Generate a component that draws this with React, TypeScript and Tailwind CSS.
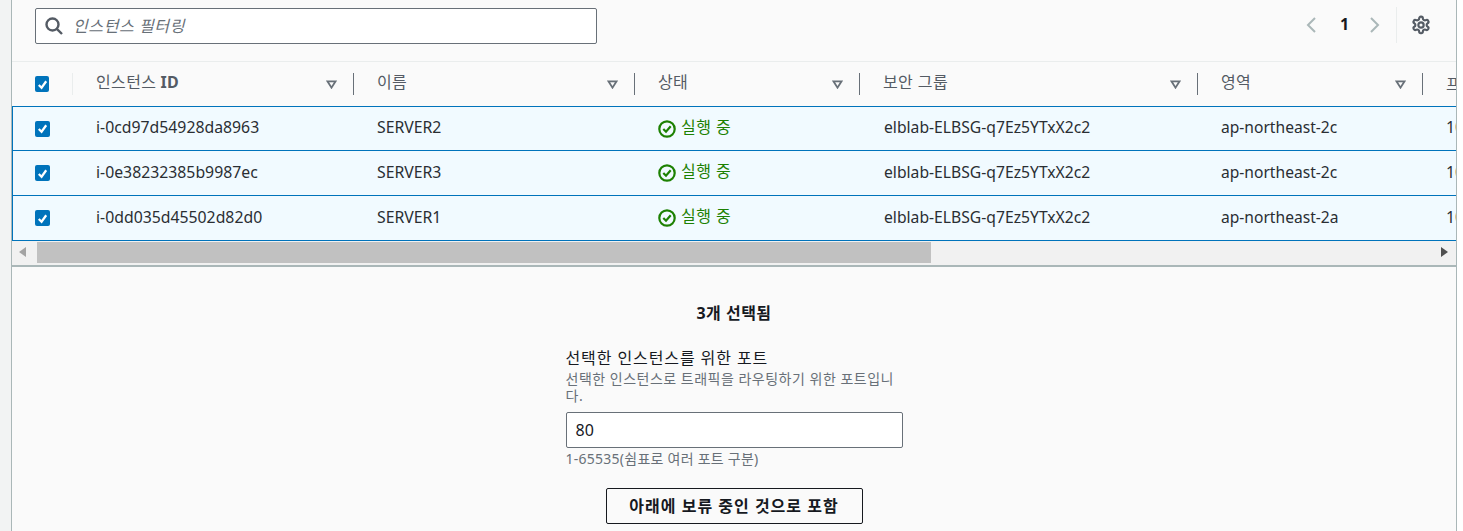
const font = "font-['Noto_Sans','Noto_Sans_CJK_KR',sans-serif]";

const columns = [
  { label: '인스턴스', suffix: 'ID', width: 'w-[281px]' },
  { label: '이름', width: 'w-[281px]' },
  { label: '상태', width: 'w-[225px]' },
  { label: '보안 그룹', width: 'w-[338px]' },
  { label: '영역', width: 'w-[225px]' },
];

const rows = [
  { id: 'i-0cd97d54928da8963', name: 'SERVER2', zone: 'ap-northeast-2c' },
  { id: 'i-0e38232385b9987ec', name: 'SERVER3', zone: 'ap-northeast-2c' },
  { id: 'i-0dd035d45502d82d0', name: 'SERVER1', zone: 'ap-northeast-2a' },
];

function Check() {
  return (
    <span className="flex h-[16px] w-[15px] items-center justify-center rounded-[2px] bg-[#0073bb]">
      <svg viewBox="0 0 14 14" className="h-[13px] w-[13px]" fill="none" stroke="white" strokeWidth="2.4">
        <path d="M3 7.5 6 10.5 11 3.5" />
      </svg>
    </span>
  );
}

function SortArrow() {
  return (
    <svg viewBox="0 0 12 10" className="h-[9px] w-[11px]" fill="none" stroke="#687078" strokeWidth="2">
      <path d="M1.5 1.5h9L6 8.5z" />
    </svg>
  );
}

function RunningIcon() {
  return (
    <svg viewBox="0 0 18 18" className="h-[18px] w-[18px] shrink-0" fill="none" stroke="#1d8102" strokeWidth="2.2">
      <circle cx="9" cy="9" r="7.7" />
      <path d="M5.3 9 8 11.7 12.7 6.3" />
    </svg>
  );
}

function SearchIcon() {
  return (
    <svg viewBox="0 0 18 18" className="h-[18px] w-[18px]" fill="none" stroke="#545b64" strokeWidth="2.4">
      <circle cx="7.5" cy="7.5" r="6" />
      <path d="M11.8 11.8 17 17" />
    </svg>
  );
}

function PageChevron({ d }: { d: string }) {
  return (
    <svg viewBox="0 0 12 18" className="h-[18px] w-[12px]" fill="none" stroke="#aab7b8" strokeWidth="2">
      <path d={d} />
    </svg>
  );
}

function GearIcon() {
  return (
    <svg viewBox="0 0 24 24" className="h-[20px] w-[20px]" fill="none" stroke="#545b64" strokeWidth="2.6" strokeLinejoin="round">
      <path d="M12.2 2h-.4a2 2 0 0 0-2 2v.2a2 2 0 0 1-1 1.7l-.4.3a2 2 0 0 1-2 0l-.2-.1a2 2 0 0 0-2.7.7l-.2.4a2 2 0 0 0 .7 2.7l.2.1a2 2 0 0 1 1 1.7v.5a2 2 0 0 1-1 1.7l-.2.1a2 2 0 0 0-.7 2.7l.2.4a2 2 0 0 0 2.7.7l.2-.1a2 2 0 0 1 2 0l.4.3a2 2 0 0 1 1 1.7v.2a2 2 0 0 0 2 2h.4a2 2 0 0 0 2-2v-.2a2 2 0 0 1 1-1.7l.4-.3a2 2 0 0 1 2 0l.2.1a2 2 0 0 0 2.7-.7l.2-.4a2 2 0 0 0-.7-2.7l-.2-.1a2 2 0 0 1-1-1.7v-.5a2 2 0 0 1 1-1.7l.2-.1a2 2 0 0 0 .7-2.7l-.2-.4a2 2 0 0 0-2.7-.7l-.2.1a2 2 0 0 1-2 0l-.4-.3a2 2 0 0 1-1-1.7V4a2 2 0 0 0-2-2z" />
      <circle cx="12" cy="12" r="3.2" />
    </svg>
  );
}

export default function App() {
  return (
    <div className={`${font} h-[531px] w-[1463px] overflow-hidden bg-white text-[15.8px] text-[#2a2e33]`}>
      <div className="flex h-full">
        <div className="w-[12px] shrink-0 border-r border-[#aab7b8] bg-[#f2f3f3]" />
        <div className="flex w-[1445px] shrink-0 flex-col border-r border-[#aab7b8] bg-[#fafafa]">
          <div className="flex h-[62px] shrink-0 items-start border-b border-[#eaeded] pl-[23px]">
            <div className="mt-2 flex h-[36px] w-[562px] items-center rounded-[2px] border border-[#687078] bg-white pl-[9px]">
              <SearchIcon />
              <span className="ml-[10px] text-[16px] tracking-[0.6px] italic text-[#687078]">인스턴스 필터링</span>
            </div>
            <div className="ml-[708px] mt-[7px] flex h-[36px] items-center">
              <PageChevron d="M10 2 3 9l7 7" />
              <span className="ml-[23px] -translate-y-[1px] text-[16px] font-bold text-[#16191f]">1</span>
              <span className="ml-[20px]">
                <PageChevron d="M2 2l7 7-7 7" />
              </span>
              <span className="ml-[15px] h-[36px] border-l border-[#eaeded]" />
              <span className="ml-[14px]">
                <GearIcon />
              </span>
            </div>
          </div>

          <div className="flex h-[44px] shrink-0 items-center">
            <div className="flex w-[61px] shrink-0 items-center pl-[23px]">
              <Check />
              <span className="ml-[23px] h-[22px] border-l border-[#eaeded]" />
            </div>
            {columns.map((col) => (
              <div key={col.label} className={`${col.width} flex shrink-0 items-center pl-[23px]`}>
                <span className="flex-1 -translate-y-[2px] text-[16px] tracking-[0.4px] text-[#545b64]">
                  {col.label}
                  {col.suffix && <b className="ml-[4px]">{col.suffix}</b>}
                </span>
                <SortArrow />
                <span className="ml-[16px] h-[22px] border-l border-[#687078]" />
              </div>
            ))}
            <span className="overflow-hidden whitespace-nowrap pl-[23px] text-[16px] text-[#545b64]">프라이빗</span>
          </div>

          <div className="shrink-0 border-b border-l border-[#0073bb] bg-[#f1faff]">
            {rows.map((row, i) => {
              const lift = i === 0 ? '-translate-y-[1px]' : 'translate-y-0';
              return (
                <div
                  key={row.id}
                  className={`flex items-center overflow-hidden border-t border-[#0073bb] ${i === 0 ? 'h-[44px]' : 'h-[45px]'}`}
                >
                  <div className="w-[60px] shrink-0 pl-[22px]">
                    <Check />
                  </div>
                  <div className={`w-[281px] shrink-0 pl-[23px] ${lift}`}>{row.id}</div>
                  <div className={`w-[281px] shrink-0 pl-[23px] ${lift}`}>{row.name}</div>
                  <div className="flex w-[225px] shrink-0 items-center gap-[5px] pl-[23px] text-[#1d8102]">
                    <RunningIcon />
                    <span className="-translate-y-[2px] text-[16px] tracking-[0.5px]">실행 중</span>
                  </div>
                  <div className={`w-[338px] shrink-0 pl-[24px] text-[15.7px] ${lift}`}>elblab-ELBSG-q7Ez5YTxX2c2</div>
                  <div className={`w-[225px] shrink-0 pl-[23px] text-[15.6px] ${lift}`}>{row.zone}</div>
                  <div className={`whitespace-nowrap pl-[23px] ${lift}`}>10.0.1.12</div>
                </div>
              );
            })}
          </div>

          <div className="flex h-[26px] shrink-0 items-start border-b-2 border-[#aab7b8] bg-[#f1f1f1]">
            <svg viewBox="0 0 8 10" className="ml-[7px] mt-[6px] h-[10px] w-[8px]" fill="#a3a3a3">
              <path d="M7 0v10L0 5z" />
            </svg>
            <div className="ml-[10px] mt-[1px] h-[21px] w-[894px] bg-[#c1c1c1]" />
            <svg viewBox="0 0 8 10" className="ml-auto mr-[8px] mt-[6px] h-[10px] w-[8px]" fill="#505050">
              <path d="M1 0v10l7-5z" />
            </svg>
          </div>

          <div className="flex flex-1 flex-col items-center pt-[36px]">
            <div className="text-[16px] font-bold leading-5 tracking-[0.5px] text-[#16191f]">3개 선택됨</div>
            <div className="mt-[25px] w-[337px]">
              <div className="text-[16px] leading-5 tracking-[0.9px] text-[#16191f]">선택한 인스턴스를 위한 포트</div>
              <div className="mt-[2px] text-[14px] leading-[17px] tracking-[0.5px] text-[#687078]">
                선택한 인스턴스로 트래픽을 라우팅하기 위한 포트입니다.
              </div>
              <div className="mt-[8px] flex h-[36px] items-center rounded-[2px] border border-[#687078] bg-white pl-[9px] text-[16px] text-[#16191f]">
                80
              </div>
              <div className="mt-[2px] text-[14px] leading-[18px] tracking-[0.25px] text-[#687078]">
                1-65535(쉼표로 여러 포트 구분)
              </div>
            </div>
            <button className="mt-[20px] flex h-[36px] w-[257px] items-center justify-center rounded-[2px] border border-[#16191f] text-[16px] font-bold tracking-[1px] text-[#16191f]">
              아래에 보류 중인 것으로 포함
            </button>
          </div>
        </div>
      </div>
    </div>
  );
}
